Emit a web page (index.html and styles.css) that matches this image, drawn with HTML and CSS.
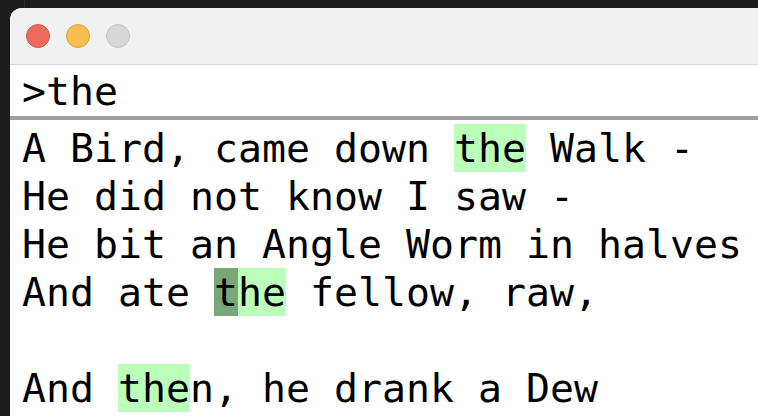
FILE: index.html
```html
<!DOCTYPE html>
<html>
<head>
<meta charset="utf-8">
<link rel="stylesheet" href="styles.css">
</head>
<body>
<div class="window">
  <div class="titlebar">
    <span class="light red"></span>
    <span class="light yellow"></span>
    <span class="light gray"></span>
  </div>
  <div class="query">&gt;the</div>
  <div class="sep"></div>
  <div class="content"><div class="line">A Bird, came down <span class="hl">the</span> Walk -</div><div class="line">He did not know I saw -</div><div class="line">He bit an Angle Worm in halves</div><div class="line">And ate <span class="hl"><span class="cur">t</span>he</span> fellow, raw,</div><div class="line"> </div><div class="line">And <span class="hl">the</span>n, he drank a Dew</div></div>
</div>
</body>
</html>
```
FILE: styles.css
```css
html, body {
  margin: 0;
  padding: 0;
  height: 100%;
  overflow: hidden;
}
body {
  background: linear-gradient(to right, transparent 24px, #2e2e2e 24px, #2e2e2e 25px, transparent 25px) no-repeat 0 0 / 100% 8px, #1c1c1c;
  font-family: "DejaVu Sans Mono", monospace;
}
.window {
  margin: 8px 0 0 10px;
  height: 408px;
  background: #ffffff;
  border-top-left-radius: 12px;
  overflow: hidden;
}
.titlebar {
  height: 56px;
  background: #f1f1f1;
  border-bottom: 1px solid #dadada;
  display: flex;
  align-items: center;
  gap: 16px;
  padding-left: 16px;
  box-sizing: content-box;
}
.light {
  width: 22px;
  height: 22px;
  border-radius: 50%;
  border: 1px solid transparent;
}
.red { background: #ee6a5f; border-color: #d9574d; }
.yellow { background: #f5be4f; border-color: #d9a43c; }
.gray { background: #d8d8d8; border-color: #c4c4c4; }
.query {
  height: 51px;
  padding-left: 12px;
  font-size: 39.86px;
  line-height: 48px;
  padding-top: 2px;
  box-sizing: border-box;
  white-space: pre;
  color: #000;
  overflow: hidden;
}
.sep {
  height: 4px;
  background: #9e9e9e;
}
.content {
  padding: 4px 0 0 12px;
  font-size: 39.86px;
  line-height: 48px;
  color: #000;
}
.line {
  height: 48px;
  white-space: pre;
}
.hl {
  display: inline-block;
  vertical-align: top;
  height: 48px;
  background: #bbffbb;
}
.cur {
  display: inline-block;
  vertical-align: top;
  height: 48px;
  background: #7aa77a;
}
```
